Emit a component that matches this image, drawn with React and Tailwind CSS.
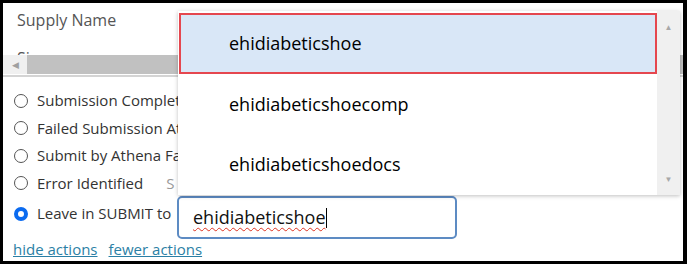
import React from 'react';

const options = ['Submission Completed', 'Failed Submission Attempt', 'Submit by Athena Fax', 'Error Identified', 'Leave in SUBMIT to'];
const suggestions = ['ehidiabeticshoe', 'ehidiabeticshoecomp', 'ehidiabeticshoedocs'];

const Radio = ({ checked }) => (
  <span
    className={
      checked
        ? 'w-[14px] h-[14px] rounded-full border-[4px] border-[#0b6bf0] bg-white shrink-0'
        : 'w-[14px] h-[14px] rounded-full border border-[#555] bg-white shrink-0'
    }
  />
);

const App = () => (
  <div className="w-[687px] h-[264px] bg-black pt-[3px] pl-[3px] pr-[4px] pb-[3px] overflow-hidden" style={{ fontFamily: '"Open Sans", "Noto Sans", sans-serif' }}>
    <div className="relative w-full h-full bg-white overflow-hidden">
      {/* table header clipped by horizontal scroll */}
      <div className="h-[52px] overflow-hidden pl-[14px] pt-[6px] text-[16px] text-[#555]">
        <div className="leading-[22px]">Supply Name</div>
        <div className="leading-[22px] mt-[16px]">Si</div>
      </div>
      <div className="h-[19px] bg-[#f0f0f0] flex items-center">
        <span className="w-[24px] flex justify-center text-[#a0a0a0] text-[9px]">◀</span>
        <div className="flex-1 h-[19px] bg-[#c1c1c1]" />
      </div>
      <div className="h-[2px] mt-[1px] bg-[#d4d4d4]" />

      <div className="flex flex-col gap-[8.5px] pl-[11px] pt-[14px] text-[15px] text-[#333]">
        {options.map((o, i) => (
          <div key={o} className={i === 4 ? 'flex items-center gap-[9px] h-[19px] mt-[3px] whitespace-nowrap' : 'flex items-center gap-[9px] h-[19px] whitespace-nowrap'}>
            <Radio checked={i === 4} />
            <span>{o}</span>
            {i === 3 && <span className="ml-[14px] text-[#999]">S</span>}
          </div>
        ))}
        <div className="flex gap-[11px] mt-[6px] -ml-[1px] text-[15px] text-[#2b7fa5] underline">
          <span>hide actions</span>
          <span>fewer actions</span>
        </div>
      </div>

      {/* autocomplete input */}
      <div className="absolute left-[174px] top-[193px] w-[280px] h-[43px] rounded-[5px] border-2 border-[#5d8bc3] bg-white flex items-center pl-[14px] text-[18px] text-[#111]">
        <span className="underline decoration-wavy decoration-[#d32] decoration-1 underline-offset-[3px]">ehidiabeticshoe</span>
        <span className="w-px h-[20px] bg-black" />
      </div>

      {/* suggestion list */}
      <div className="absolute left-[175px] top-[8px] w-[502px] h-[184px] bg-white flex shadow-[0_1px_4px_rgba(0,0,0,0.25)]">
        <div className="flex-1 flex flex-col pt-[2px] pl-[1px]">
          {suggestions.map((s, i) => (
            <div
              key={s}
              className={
                i === 0
                  ? 'h-[61px] flex items-center pl-[48px] text-[18px] text-black bg-[#d9e7f7] border-2 border-[#e5474f]'
                  : 'h-[60px] flex items-center pl-[50px] text-[18px] text-black'
              }
            >
              {s}
            </div>
          ))}
        </div>
        <div className="w-[23px] bg-[#f0f0f0] flex flex-col justify-between items-center py-[10px] text-[8px] text-[#a8a8a8]">
          <span>▲</span>
          <span>▼</span>
        </div>
      </div>
    </div>
  </div>
);

export default App;
